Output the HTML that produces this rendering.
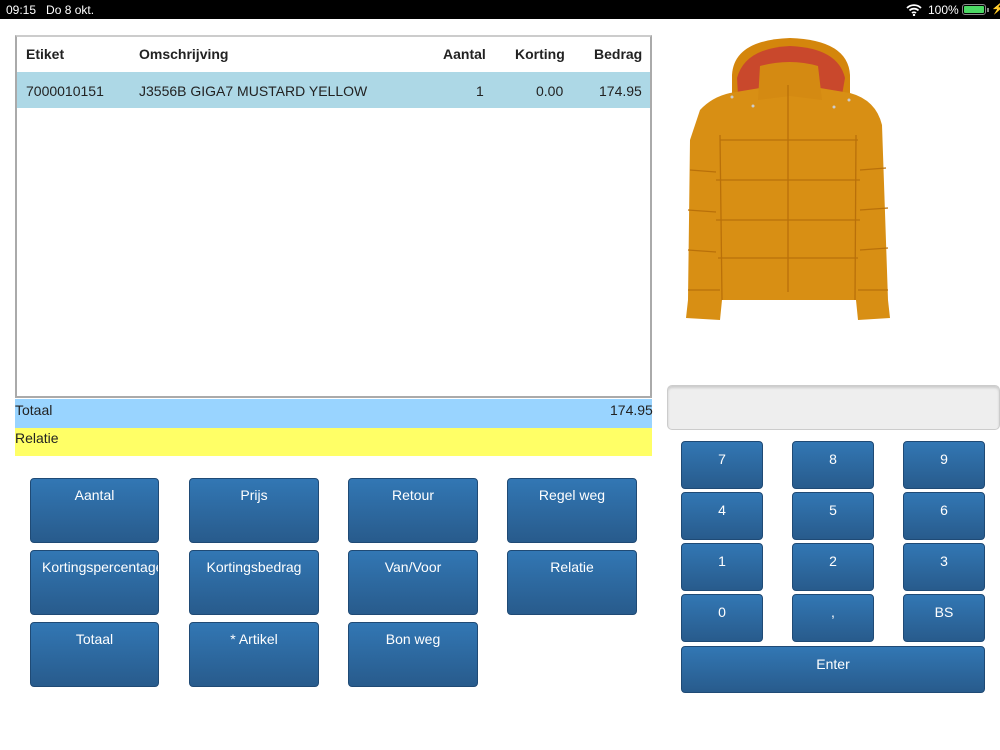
<!DOCTYPE html>
<html><head><meta charset="utf-8"><style>
*{margin:0;padding:0;box-sizing:border-box}
body{width:1000px;height:750px;position:relative;background:#fff;font-family:"Liberation Sans",Arial,sans-serif;overflow:hidden}
.sb{position:absolute;left:0;top:0;width:1000px;height:19px;background:#000;color:#fff;font-size:12px}
.tbl{position:absolute;left:15px;top:35px;width:637px;height:363px;border:2px solid #aaa;border-top-color:#ccc;background:#fff}
.t{position:absolute;font-size:14px;color:#222}
.h{font-weight:bold}
.btn{position:absolute;border-radius:4px;background:linear-gradient(#3277b4,#285b8c);border:1px solid #1f4a75;color:#fff;font-size:14px;text-align:center;padding-top:8px}
.k{padding-top:9px}
</style></head><body>
<div class="sb"><span style="position:absolute;left:6px;top:3px">09:15&nbsp;&nbsp;&nbsp;Do 8 okt.</span>
<svg style="position:absolute;left:906px;top:4px" width="16" height="12" viewBox="0 0 16 12"><path d="M1 4a10 10 0 0 1 14 0M3.5 6.5a6.5 6.5 0 0 1 9 0M6 9a3 3 0 0 1 4 0" stroke="#fff" stroke-width="1.8" fill="none"/><circle cx="8" cy="11" r="1.2" fill="#fff"/></svg>
<span style="position:absolute;left:928px;top:3px">100%</span>
<div style="position:absolute;left:962px;top:4px;width:24px;height:11px;border:1px solid #888;border-radius:3px;padding:1px"><div style="width:100%;height:100%;background:#4cd964;border-radius:1px"></div></div>
<div style="position:absolute;left:987px;top:8px;width:2px;height:4px;background:#888"></div>
<span style="position:absolute;left:991px;top:2px;font-size:11px">⚡</span></div>

<div class="tbl">
<div style="position:absolute;left:0;top:35px;width:633px;height:36px;background:#add8e6"></div>
</div>
<div class="t h" style="left:26px;top:46px">Etiket</div>
<div class="t h" style="left:139px;top:46px">Omschrijving</div>
<div class="t h" style="left:443px;top:46px">Aantal</div>
<div class="t h" style="left:515px;top:46px">Korting</div>
<div class="t h" style="left:594px;top:46px">Bedrag</div>
<div class="t" style="left:26px;top:83px">7000010151</div>
<div class="t" style="left:139px;top:83px">J3556B GIGA7 MUSTARD YELLOW</div>
<div class="t" style="left:476px;top:83px">1</div>
<div class="t" style="left:536px;top:83px">0.00</div>
<div class="t" style="left:599px;top:83px">174.95</div>

<div style="position:absolute;left:15px;top:399px;width:637px;height:29px;background:#99d4ff"></div>
<div class="t" style="left:15px;top:402px">Totaal</div>
<div class="t" style="left:610px;top:402px">174.95</div>
<div style="position:absolute;left:15px;top:428px;width:637px;height:28px;background:#ffff66"></div>
<div class="t" style="left:15px;top:430px">Relatie</div>

<div class="btn" style="left:30px;top:478px;width:129px;height:65px">Aantal</div>
<div class="btn" style="left:189px;top:478px;width:130px;height:65px">Prijs</div>
<div class="btn" style="left:348px;top:478px;width:130px;height:65px">Retour</div>
<div class="btn" style="left:507px;top:478px;width:130px;height:65px">Regel weg</div>
<div class="btn" style="left:30px;top:550px;width:129px;height:65px;white-space:nowrap;overflow:hidden;padding-left:11px;text-align:left">Kortingspercentage</div>
<div class="btn" style="left:189px;top:550px;width:130px;height:65px">Kortingsbedrag</div>
<div class="btn" style="left:348px;top:550px;width:130px;height:65px">Van/Voor</div>
<div class="btn" style="left:507px;top:550px;width:130px;height:65px">Relatie</div>
<div class="btn" style="left:30px;top:622px;width:129px;height:65px">Totaal</div>
<div class="btn" style="left:189px;top:622px;width:130px;height:65px">* Artikel</div>
<div class="btn" style="left:348px;top:622px;width:130px;height:65px">Bon weg</div>

<svg style="position:absolute;left:670px;top:30px" width="230" height="300" viewBox="670 30 230 300">
<path d="M732 75 Q734 40 790 38 Q848 40 850 75 L850 105 L732 105 Z" fill="#d4860c"/>
<path d="M737 78 Q745 48 790 46 Q838 48 845 78 L842 95 L738 95 Z" fill="#c9482c"/>
<path d="M700 110 Q712 97 730 93 L760 88 L790 96 L820 88 L850 93 Q876 100 882 125 L888 300 L890 318 L858 320 L856 300 L722 300 L720 320 L686 318 L688 300 L690 140 Z" fill="#d88f14"/>
<path d="M760 66 Q790 58 818 66 L822 100 L790 96 L758 100 Z" fill="#d48a12"/>
<g stroke="#b9700a" stroke-width="1.3" fill="none">
<path d="M788 85 L788 292"/><path d="M720 140 L858 140M716 180 L860 180M716 220 L860 220M718 258 L858 258M690 170 L716 172M688 210 L716 212M688 250 L716 252M688 290 L720 290M860 170 L886 168M860 210 L888 208M860 250 L888 248M858 290 L888 290"/>
<path d="M720 135 L722 300M856 135 L855 300"/></g>
<circle cx="732" cy="97" r="1.5" fill="#ccc"/><circle cx="753" cy="106" r="1.5" fill="#ccc"/><circle cx="834" cy="107" r="1.5" fill="#ccc"/><circle cx="849" cy="100" r="1.5" fill="#ccc"/>
</svg>

<div style="position:absolute;left:667px;top:385px;width:333px;height:45px;background:#eee;border:1px solid #ccc;border-radius:5px;box-shadow:inset 0 2px 2px #ccc"></div>

<div class="btn k" style="left:681px;top:441px;width:82px;height:48px">7</div>
<div class="btn k" style="left:792px;top:441px;width:82px;height:48px">8</div>
<div class="btn k" style="left:903px;top:441px;width:82px;height:48px">9</div>
<div class="btn k" style="left:681px;top:492px;width:82px;height:48px">4</div>
<div class="btn k" style="left:792px;top:492px;width:82px;height:48px">5</div>
<div class="btn k" style="left:903px;top:492px;width:82px;height:48px">6</div>
<div class="btn k" style="left:681px;top:543px;width:82px;height:48px">1</div>
<div class="btn k" style="left:792px;top:543px;width:82px;height:48px">2</div>
<div class="btn k" style="left:903px;top:543px;width:82px;height:48px">3</div>
<div class="btn k" style="left:681px;top:594px;width:82px;height:48px">0</div>
<div class="btn k" style="left:792px;top:594px;width:82px;height:48px">,</div>
<div class="btn k" style="left:903px;top:594px;width:82px;height:48px">BS</div>
<div class="btn k" style="left:681px;top:646px;width:304px;height:47px;padding-top:9px">Enter</div>
</body></html>
